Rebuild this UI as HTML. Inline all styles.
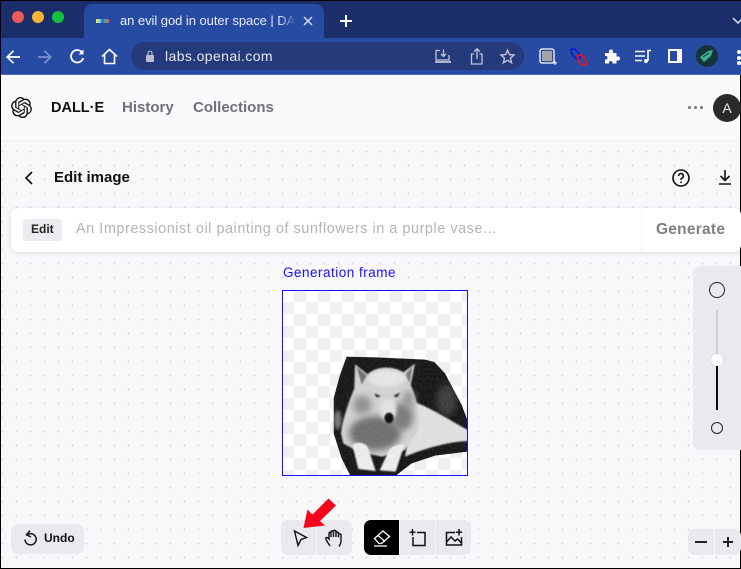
<!DOCTYPE html>
<html><head><meta charset="utf-8">
<style>
html,body{margin:0;padding:0;width:741px;height:569px;overflow:hidden;background:#000}
*{box-sizing:border-box}
body{font-family:"Liberation Sans",sans-serif;position:relative}
.a{position:absolute}
.t{position:absolute;white-space:nowrap;line-height:1}
svg{position:absolute;overflow:visible}
</style></head><body>
<!-- tab strip -->
<div class="a" style="left:1px;top:1px;width:740px;height:37px;background:#1c2e69"></div>
<div class="a" style="left:84px;top:4px;width:240px;height:36px;background:#274aa3;border-radius:8px 8px 0 0"></div>
<div class="a" style="left:12px;top:11px;width:12px;height:12px;border-radius:50%;background:#ee5a55"></div>
<div class="a" style="left:32px;top:11px;width:12px;height:12px;border-radius:50%;background:#f6b633"></div>
<div class="a" style="left:52px;top:11px;width:12px;height:12px;border-radius:50%;background:#12c23f"></div>
<div class="a" style="left:96px;top:19px;width:13px;height:4px;background:linear-gradient(90deg,#f5e050 0 20%,#66ddcc 20% 40%,#3c6fe0 40% 60%,#2bb673 60% 80%,#e8507a 80%)"></div>
<div class="t" style="left:120px;top:14px;font-size:13px;color:#e8ecf8;width:176px;overflow:hidden;letter-spacing:-.05px;-webkit-mask-image:linear-gradient(90deg,#000 90%,transparent)">an evil god in outer space | DALL·E</div>
<svg style="left:302px;top:15px" width="12" height="12"><path d="M2 2L10 10M10 2L2 10" stroke="#d5dcf0" stroke-width="1.5"/></svg>
<svg style="left:339px;top:14px" width="14" height="14"><path d="M7 1V13M1 7H13" stroke="#fff" stroke-width="2"/></svg>
<svg style="left:733px;top:17px" width="8" height="8"><path d="M0 1L5 6L10 1" stroke="#dfe5f5" stroke-width="1.5" fill="none"/></svg>
<!-- toolbar -->
<div class="a" style="left:1px;top:38px;width:740px;height:37px;background:#274aa3;border-bottom:1px solid #4a6cc0"></div>
<svg style="left:6px;top:49px" width="16" height="16" fill="none" stroke="#fff" stroke-width="1.7"><path d="M14 8H1M7.5 1.8L1.2 8L7.5 14.2"/></svg>
<svg style="left:37px;top:49px" width="16" height="16" fill="none" stroke="#7c92cf" stroke-width="1.7"><path d="M1 8H14M7.5 1.8L13.8 8L7.5 14.2"/></svg>
<svg style="left:69px;top:48px" width="17" height="17" fill="none" stroke="#fff" stroke-width="1.8"><path d="M13.5 5A6.2 6.2 0 1 0 14.2 10"/><path d="M14.5 1.5V6.5H9.5" fill="#fff" stroke="none"/></svg>
<svg style="left:101px;top:48px" width="17" height="17" fill="none" stroke="#fff" stroke-width="1.6"><path d="M1 8.5L8.5 1.5L16 8.5M3.5 7V15.5H13.5V7"/></svg>
<div class="a" style="left:131px;top:42px;width:393px;height:28px;border-radius:14px;background:#243a7a"></div>
<svg style="left:145px;top:50px" width="10" height="12"><rect x="1" y="5" width="8" height="7" rx="1" fill="#b9bfcf"/><path d="M3 5V3.2A2 2 0 0 1 7 3.2V5" fill="none" stroke="#b9bfcf" stroke-width="1.2"/></svg>
<div class="t" style="left:165px;top:49px;font-size:14px;color:#e6e9f4;letter-spacing:.4px">labs.openai.com</div>
<svg style="left:435px;top:49px" width="16" height="15" fill="none" stroke="#bfc6da" stroke-width="1.3"><path d="M5 1.5H1V11H14V6"/><path d="M8.5 0.5V7M5.8 4.8L8.5 7.5L11.2 4.8"/><path d="M0 13H16" stroke-width="1.8"/></svg>
<svg style="left:470px;top:48px" width="14" height="17" fill="none" stroke="#bfc6da" stroke-width="1.3"><path d="M4 6H1.5V16H12V6H9.5"/><path d="M7 11V1M4 3.6L7 .8L10 3.6"/></svg>
<svg style="left:500px;top:49px" width="15" height="15" fill="none" stroke="#bfc6da" stroke-width="1.4"><path d="M7.5 1.2L9.4 5.6L14 6L10.5 9.1L11.6 13.8L7.5 11.3L3.4 13.8L4.5 9.1L1 6L5.6 5.6Z"/></svg>
<svg style="left:539px;top:48px" width="17" height="17"><rect x="1" y="1" width="14" height="14" rx="2" fill="none" stroke="#fff" stroke-width="1.3"/><rect x="3" y="3" width="10" height="10" fill="#a6a6a6"/><path d="M14 15H18M16 13V17" stroke="#fff"/></svg>
<svg style="left:570px;top:48px" width="18" height="18" fill="none" stroke-width="1.7"><ellipse cx="5.5" cy="6" rx="6" ry="3" transform="rotate(52 5.5 6)" stroke="#1018d8"/><ellipse cx="12" cy="12" rx="6" ry="3.2" transform="rotate(52 12 12)" stroke="#f0101c"/></svg>
<svg style="left:604px;top:49px" width="15" height="15"><path d="M1 4H5V2.5A2 2 0 0 1 9 2.5V4H12.5V7.5H14A2 2 0 0 1 14 11.5H12.5V14.5H8.5V13A2 2 0 0 0 5 13V14.5H1V10.5H2.5A2 2 0 0 0 2.5 7H1Z" fill="#fff"/></svg>
<svg style="left:635px;top:49px" width="16" height="15" fill="none" stroke="#fff" stroke-width="1.6"><path d="M0 2.5H10M0 7H10M0 11.5H7"/><path d="M13 12V1.5H16"/><circle cx="11" cy="12" r="2" fill="#fff" stroke="none"/></svg>
<div class="a" style="left:668px;top:49px;width:14px;height:14px;background:#fff"></div>
<div class="a" style="left:670px;top:51px;width:7px;height:10px;background:#274aa3"></div>
<div class="a" style="left:696px;top:45px;width:22px;height:22px;border-radius:50%;background:#15343a;overflow:hidden"><svg style="left:3px;top:3px" width="16" height="16"><path d="M1 9L9 3L14 2L12 8L5 14Z" fill="#3fae93"/><path d="M4 9L10 5" stroke="#15343a"/></svg></div>
<div class="a" style="left:737px;top:50px;width:4px;height:4px;background:#fff;border-radius:50%"></div>
<div class="a" style="left:737px;top:56px;width:4px;height:4px;background:#fff;border-radius:50%"></div>
<div class="a" style="left:737px;top:61px;width:4px;height:4px;background:#fff;border-radius:50%"></div>
<!-- page -->
<div class="a" style="left:1px;top:75px;width:739px;height:493px;background:#fafafc"></div>
<div class="a" style="left:1px;top:141px;width:739px;height:427px;background-color:#f8f8fb;background-image:radial-gradient(circle at 1.5px 1.5px,#d6d6dc 0.9px,transparent 1.1px);background-size:14px 14px;background-position:0px 9px"></div>
<div class="a" style="left:1px;top:140px;width:739px;height:1px;background:#f0f0f3"></div>
<!-- header -->
<svg style="left:11px;top:97px" width="21" height="21" viewBox="0 0 24 24" fill="#111"><path d="M22.2819 9.8211a5.9847 5.9847 0 0 0-.5157-4.9108 6.0462 6.0462 0 0 0-6.5098-2.9A6.0651 6.0651 0 0 0 4.9807 4.1818a5.9847 5.9847 0 0 0-3.9977 2.9 6.0462 6.0462 0 0 0 .7427 7.0966 5.98 5.98 0 0 0 .511 4.9107 6.051 6.051 0 0 0 6.5146 2.9001A5.9847 5.9847 0 0 0 13.2599 24a6.0557 6.0557 0 0 0 5.7718-4.2058 5.9894 5.9894 0 0 0 3.9977-2.9001 6.0557 6.0557 0 0 0-.7475-7.0729zm-9.022 12.6081a4.4755 4.4755 0 0 1-2.8764-1.0408l.1419-.0804 4.7783-2.7582a.7948.7948 0 0 0 .3927-.6813v-6.7369l2.02 1.1686a.071.071 0 0 1 .038.052v5.5826a4.504 4.504 0 0 1-4.4945 4.4944zm-9.6607-4.1254a4.4708 4.4708 0 0 1-.5346-3.0137l.142.0852 4.783 2.7582a.7712.7712 0 0 0 .7806 0l5.8428-3.3685v2.3324a.0804.0804 0 0 1-.0332.0615L9.74 19.9502a4.4992 4.4992 0 0 1-6.1408-1.6464zM2.3408 7.8956a4.485 4.485 0 0 1 2.3655-1.9728V11.6a.7664.7664 0 0 0 .3879.6765l5.8144 3.3543-2.0201 1.1685a.0757.0757 0 0 1-.071 0l-4.8303-2.7865A4.504 4.504 0 0 1 2.3408 7.872zm16.5963 3.8558L13.1038 8.364 15.1192 7.2a.0757.0757 0 0 1 .071 0l4.8303 2.7913a4.4944 4.4944 0 0 1-.6765 8.1042v-5.6772a.79.79 0 0 0-.407-.667zm2.0107-3.0231l-.142-.0852-4.7735-2.7818a.7759.7759 0 0 0-.7854 0L9.409 9.2297V6.8974a.0662.0662 0 0 1 .0284-.0615l4.8303-2.7866a4.4992 4.4992 0 0 1 6.6802 4.66zM8.3065 12.863l-2.02-1.1638a.0804.0804 0 0 1-.038-.0567V6.0742a4.4992 4.4992 0 0 1 7.3757-3.4537l-.142.0805L8.704 5.459a.7948.7948 0 0 0-.3927.6813zm1.0976-2.3654l2.602-1.4998 2.6069 1.4998v2.9994l-2.5974 1.4997-2.6067-1.4997Z"/></svg>
<div class="t" style="left:51px;top:101px;font-size:14.5px;font-weight:bold;color:#111">DALL·E</div>
<div class="t" style="left:122px;top:100px;font-size:15px;font-weight:bold;color:#707078">History</div>
<div class="t" style="left:193px;top:100px;font-size:15px;font-weight:bold;color:#707078">Collections</div>
<div class="a" style="left:688px;top:106px;width:3px;height:3px;border-radius:50%;background:#777"></div>
<div class="a" style="left:694px;top:106px;width:3px;height:3px;border-radius:50%;background:#777"></div>
<div class="a" style="left:700px;top:106px;width:3px;height:3px;border-radius:50%;background:#777"></div>
<div class="a" style="left:713px;top:94px;width:28px;height:28px;border-radius:50%;background:#2a2a2a;color:#eee;font-size:14px;text-align:center;line-height:28px">A</div>
<!-- title row -->
<svg style="left:24px;top:171px" width="10" height="14" fill="none" stroke="#111" stroke-width="1.7"><path d="M8 1L2 7L8 13"/></svg>
<div class="t" style="left:54px;top:170px;font-size:15px;font-weight:bold;color:#111">Edit image</div>
<svg style="left:672px;top:169px" width="18" height="18" fill="none" stroke="#111" stroke-width="1.6"><circle cx="9" cy="9" r="8"/><path d="M6.6 7A2.4 2.4 0 1 1 9.8 9.2C9.1 9.6 9 10 9 11"/><circle cx="9" cy="13.3" r=".9" fill="#111" stroke="none"/></svg>
<svg style="left:718px;top:170px" width="14" height="15" fill="none" stroke="#111" stroke-width="1.6"><path d="M7 0V10M2.5 6L7 10.5L11.5 6M1 14H13"/></svg>
<!-- prompt bar -->
<div class="a" style="left:11px;top:208px;width:730px;height:44px;background:#fff;border-radius:7px;box-shadow:0 1px 5px rgba(30,30,60,.13)"></div>
<div class="a" style="left:641px;top:208px;width:1px;height:44px;background:#f0f0f2"></div>
<div class="a" style="left:23px;top:219px;width:39px;height:22px;background:#ebebf0;border-radius:4px"></div>
<div class="t" style="left:31px;top:223px;font-size:12px;font-weight:bold;color:#222">Edit</div>
<div class="t" style="left:76px;top:222px;font-size:14.5px;color:#b4b4b8;letter-spacing:.51px">An Impressionist oil painting of sunflowers in a purple vase...</div>
<div class="t" style="left:656px;top:222px;font-size:15.5px;font-weight:bold;color:#808084;letter-spacing:.25px">Generate</div>
<!-- frame -->
<div class="t" style="left:283px;top:266px;font-size:13.5px;color:#1a0dff;letter-spacing:.5px">Generation frame</div>
<div class="a" style="left:283px;top:291px;width:184px;height:184px;background-color:#fff;background-image:conic-gradient(#f0f0f2 25%,#fff 25% 50%,#f0f0f2 50% 75%,#fff 75%);background-size:24px 24px;background-position:-1px -1px"></div>
<svg style="left:275px;top:285px" width="200" height="195" viewBox="0 0 600 585">
<defs>
<filter id="b1" x="-40%" y="-40%" width="180%" height="180%"><feGaussianBlur stdDeviation="10"/></filter>
<filter id="b2" x="-20%" y="-20%" width="140%" height="140%"><feGaussianBlur stdDeviation="5"/></filter>
<filter id="b3" x="-30%" y="-30%" width="160%" height="160%"><feGaussianBlur stdDeviation="2"/></filter>
<filter id="fur" x="0" y="0" width="100%" height="100%"><feTurbulence type="fractalNoise" baseFrequency="0.14" numOctaves="2" seed="4"/><feColorMatrix values="0 0 0 0 0.45  0 0 0 0 0.45  0 0 0 0 0.45  0.9 0 0 0 -0.3"/></filter>
<clipPath id="c"><path d="M215 215L300 217L450 224L478 231L510 265L560 360L577 405V500L480 512L410 535L365 570H225L200 520L176 445V340L195 270Z"/></clipPath>
</defs>
<g clip-path="url(#c)">
<rect x="170" y="210" width="410" height="365" fill="#161616"/>
<ellipse cx="515" cy="345" rx="30" ry="48" fill="#3e3e3e" filter="url(#b1)"/>
<ellipse cx="188" cy="405" rx="12" ry="28" fill="#777" filter="url(#b2)"/>
<path d="M420 352C460 365 515 400 580 436V468C520 470 450 490 390 515Z" fill="#e2e2e2" filter="url(#b3)"/>
<path d="M198 445C203 400 222 350 238 310L240 238L278 268C300 245 350 240 385 262L420 236L407 300C425 340 435 380 428 440L390 495L320 515L250 500L205 475Z" fill="#d4d4d4" filter="url(#b3)"/>
<ellipse cx="300" cy="445" rx="78" ry="52" fill="#6f6f6f" filter="url(#b1)"/>
<ellipse cx="382" cy="395" rx="32" ry="42" fill="#7c7c7c" filter="url(#b1)"/>
<ellipse cx="262" cy="360" rx="28" ry="28" fill="#929292" filter="url(#b1)"/>
<ellipse cx="400" cy="345" rx="18" ry="28" fill="#999" filter="url(#b1)"/>
<ellipse cx="335" cy="280" rx="55" ry="24" fill="#e8e8e8" filter="url(#b2)"/>
<ellipse cx="340" cy="375" rx="24" ry="34" fill="#e4e4e4" filter="url(#b2)"/>
<path d="M245 245L275 272L260 298Z" fill="#707070" filter="url(#b3)"/>
<path d="M412 243L392 268L404 295Z" fill="#787878" filter="url(#b3)"/>
<path d="M298 325L318 333L305 338Z" fill="#222" filter="url(#b3)"/>
<path d="M376 323L355 332L366 338Z" fill="#222" filter="url(#b3)"/>
<ellipse cx="342" cy="399" rx="14" ry="16" fill="#111" filter="url(#b3)"/>
<path d="M232 480C245 470 270 470 280 490L302 558L250 552Z" fill="#efefef" filter="url(#b3)"/>
<path d="M340 500C350 480 380 475 388 480L362 560L314 556Z" fill="#efefef" filter="url(#b3)"/>
<rect x="170" y="210" width="410" height="365" filter="url(#fur)" opacity=".28"/>
</g>
</svg>
<div class="a" style="left:282px;top:290px;width:186px;height:186px;border:1px solid #1a0dff"></div>
<!-- slider -->
<div class="a" style="left:693px;top:266px;width:48px;height:184px;background:#e9e9ee;border-radius:7px 0 0 7px"></div>
<div class="a" style="left:709px;top:282px;width:16px;height:16px;border:1.4px solid #222;border-radius:50%"></div>
<div class="a" style="left:716px;top:310px;width:2px;height:50px;background:#cfcfd4"></div>
<div class="a" style="left:716px;top:360px;width:2px;height:50px;background:#0a0a0a"></div>
<div class="a" style="left:711px;top:354px;width:12px;height:12px;background:#fff;border-radius:50%;box-shadow:0 0 2px rgba(0,0,0,.15)"></div>
<div class="a" style="left:711px;top:422px;width:12px;height:12px;border:1.4px solid #222;border-radius:50%"></div>
<!-- undo -->
<div class="a" style="left:11px;top:524px;width:73px;height:30px;background:#e9e9ee;border-radius:7px"></div>
<svg style="left:23px;top:530px" width="15" height="17" fill="none" stroke="#111" stroke-width="1.5"><path d="M4 5A5.6 5.6 0 1 1 2 9.5"/><path d="M7 0.8L3.5 4.8L8 7"/></svg>
<div class="t" style="left:44px;top:532px;font-size:12px;font-weight:bold;color:#111">Undo</div>
<!-- tools -->
<div class="a" style="left:281px;top:520px;width:35px;height:35px;background:#e9e9ee;border-radius:7px 0 0 7px"></div>
<div class="a" style="left:317px;top:520px;width:35px;height:35px;background:#e9e9ee;border-radius:0 7px 7px 0"></div>
<svg style="left:293px;top:530px" width="15" height="17" fill="none" stroke="#111" stroke-width="1.4"><path d="M1.5 1L13.5 7.5L8 9.5L5 15.5Z"/></svg>
<svg style="left:325px;top:529px" width="19" height="19" fill="none" stroke="#111" stroke-width="1.4"><path d="M5 17C3 14 1 11 .8 9.5C.8 8 2.5 8 4 10V4.5C4 3 6 3 6 4.5V3C6 1.5 8.5 1.5 8.5 3V2.5C8.5 1 11 1 11 2.5V4C11 2.8 13.5 2.8 13.5 4.2V5.5C13.5 4.5 16 4.5 16 6V12C16 14 15 16 14 17.5"/><path d="M8.5 3V8M11 3.5V8M6 4.5V8M13.5 5V8.5"/></svg>
<div class="a" style="left:364px;top:520px;width:35px;height:35px;background:#000;border-radius:7px 0 0 7px"></div>
<div class="a" style="left:400px;top:520px;width:35px;height:35px;background:#e9e9ee"></div>
<div class="a" style="left:436px;top:520px;width:35px;height:35px;background:#e9e9ee;border-radius:0 7px 7px 0"></div>
<svg style="left:373px;top:529px" width="18" height="18" fill="none" stroke="#fff" stroke-width="1.3"><path d="M1.5 9.5L10 2L16.5 7.5L8.5 14.5H6Z"/><path d="M5 6.5L12 12.5"/><path d="M1 17H14"/></svg>
<svg style="left:409px;top:529px" width="18" height="18" fill="none" stroke="#111" stroke-width="1.5"><path d="M8 3.5H16V16.5H4V8"/><path d="M3.5 0V6.5M.5 3.2H6.5" stroke-width="1.4"/></svg>
<svg style="left:445px;top:529px" width="18" height="18" fill="none" stroke="#111" stroke-width="1.5"><path d="M10 3.5H1.5V16H16.5V8"/><path d="M1.5 13L6 8L10 12L12.5 10L16.5 14"/><path d="M14 0V6.5M10.8 3.2H17.2"/></svg>
<!-- red arrow -->
<svg style="left:300px;top:496px" width="40" height="36"><path d="M3.5 32L7.5 13.5L12.5 18.5L28.5 2.5L36 9.5L20 25L25 29.5Z" fill="#f5051c"/></svg>
<!-- zoom -->
<div class="a" style="left:688px;top:529px;width:26px;height:26px;background:#e9e9ee;border-radius:7px 0 0 7px"></div>
<div class="a" style="left:715px;top:529px;width:26px;height:26px;background:#e9e9ee;border-radius:0 7px 7px 0"></div>
<div class="a" style="left:695px;top:541px;width:12px;height:2px;background:#222"></div>
<div class="a" style="left:723px;top:541px;width:10px;height:2px;background:#222"></div>
<div class="a" style="left:727px;top:537px;width:2px;height:10px;background:#222"></div>
</body></html>
